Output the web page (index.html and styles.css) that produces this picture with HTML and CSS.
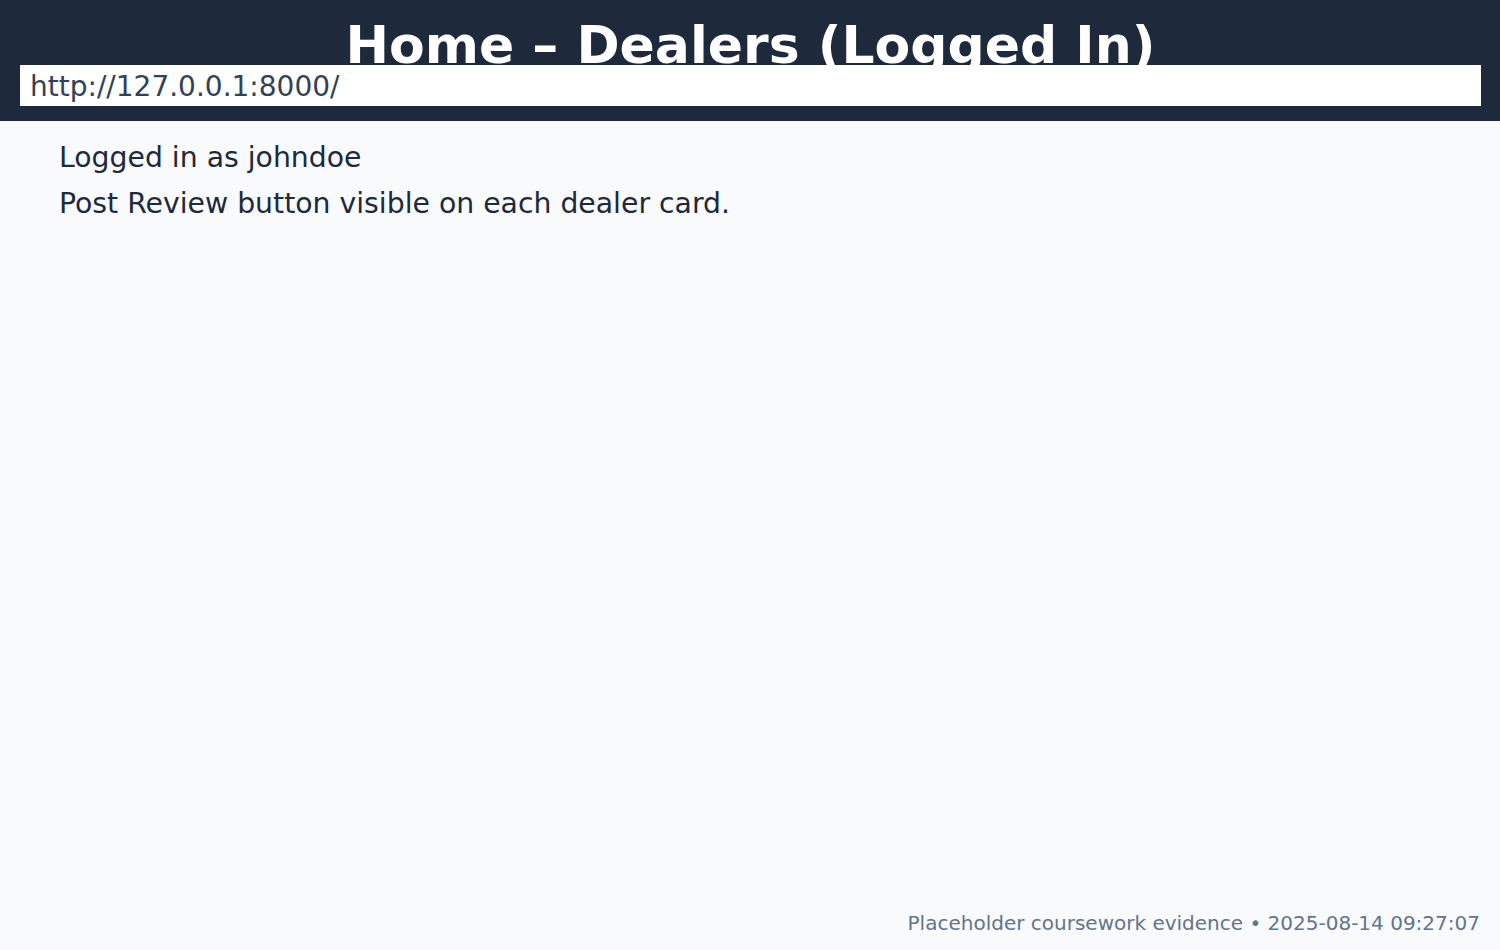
FILE: index.html
```html
<!DOCTYPE html>
<html lang="en">
<head>
<meta charset="utf-8">
<title>Home – Dealers (Logged In)</title>
<link rel="stylesheet" href="styles.css">
</head>
<body>
<div class="page">
  <header class="topbar">
    <h1 class="title">Home – Dealers (Logged In)</h1>
    <div class="url">http://127.0.0.1:8000/</div>
  </header>
  <main class="content">
    <p class="line">Logged in as johndoe</p>
    <p class="line">Post Review button visible on each dealer card.</p>
  </main>
  <footer class="foot">Placeholder coursework evidence • 2025-08-14 09:27:07</footer>
</div>
</body>
</html>
```

FILE: styles.css
```css
html, body {
  margin: 0;
  padding: 0;
}
body {
  background: #f8fafc;
  font-family: "DejaVu Sans", "Liberation Sans", sans-serif;
  color: #1e293b;
}
.page {
  display: flex;
  flex-direction: column;
  min-height: 950px;
  box-sizing: border-box;
}
.topbar {
  background: #1e293b;
  padding: 20px 19px 15px 20px;
  display: flex;
  flex-direction: column;
}
.title {
  margin: 0;
  height: 45px;
  overflow: hidden;
  font-size: 52px;
  line-height: 50px;
  font-weight: bold;
  color: #ffffff;
  text-align: center;
}
.url {
  background: #ffffff;
  height: 41px;
  box-sizing: border-box;
  padding: 2px 0 0 10px;
  line-height: 39px;
  font-size: 28px;
  color: #334155;
  white-space: nowrap;
}
.content {
  display: flex;
  flex-direction: column;
  gap: 13px;
  padding: 20px 0 0 59px;
}
.line {
  margin: 0;
  font-size: 28.3px;
}
.foot {
  margin-top: auto;
  text-align: right;
  font-size: 20px;
  color: #64748b;
  padding: 0 20px 15px 0;
}
```
